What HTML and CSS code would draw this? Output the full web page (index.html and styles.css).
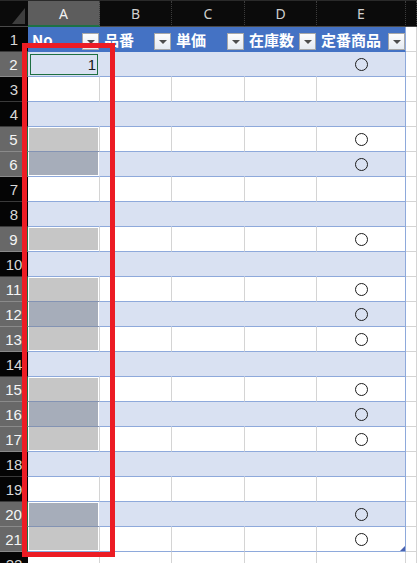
FILE: index.html
```html
<!DOCTYPE html>
<html lang="ja">
<head>
  <meta charset="UTF-8" />
  <meta name="viewport" content="width=device-width, initial-scale=1.0"/>
  <title>商品リスト</title>
  <link rel="stylesheet" href="styles.css">
</head>
<body>
  <div class="sheet">
    <div class="colhead">
      <div class="corner"></div>
      <div class="ch on">A</div>
      <div class="ch">B</div>
      <div class="ch">C</div>
      <div class="ch">D</div>
      <div class="ch">E</div>
      <div class="ch"></div>
    </div>

    <div class="row top">
      <div class="rh">1</div>
      <div class="c">No<span class="fb"></span></div>
      <div class="c">品番<span class="fb"></span></div>
      <div class="c">単価<span class="fb"></span></div>
      <div class="c">在庫数<span class="fb"></span></div>
      <div class="c e">定番商品<span class="fb"></span></div>
      <div class="c out"></div>
    </div>

    <div class="row even">
      <div class="rh on">2</div>
      <div class="c a active"><span class="num">1</span></div>
      <div class="c"></div><div class="c"></div><div class="c"></div>
      <div class="c e"><span class="mark"></span></div>
      <div class="c out"></div>
    </div>
    <div class="row">
      <div class="rh">3</div>
      <div class="c a"></div><div class="c"></div><div class="c"></div><div class="c"></div>
      <div class="c e"></div><div class="c out"></div>
    </div>
    <div class="row even">
      <div class="rh">4</div>
      <div class="c a"></div><div class="c"></div><div class="c"></div><div class="c"></div>
      <div class="c e"></div><div class="c out"></div>
    </div>
    <div class="row">
      <div class="rh on">5</div>
      <div class="c a sel first"></div><div class="c"></div><div class="c"></div><div class="c"></div>
      <div class="c e"><span class="mark"></span></div><div class="c out"></div>
    </div>
    <div class="row even">
      <div class="rh on">6</div>
      <div class="c a sel last"></div><div class="c"></div><div class="c"></div><div class="c"></div>
      <div class="c e"><span class="mark"></span></div><div class="c out"></div>
    </div>
    <div class="row">
      <div class="rh">7</div>
      <div class="c a"></div><div class="c"></div><div class="c"></div><div class="c"></div>
      <div class="c e"></div><div class="c out"></div>
    </div>
    <div class="row even">
      <div class="rh">8</div>
      <div class="c a"></div><div class="c"></div><div class="c"></div><div class="c"></div>
      <div class="c e"></div><div class="c out"></div>
    </div>
    <div class="row">
      <div class="rh on">9</div>
      <div class="c a sel first last"></div><div class="c"></div><div class="c"></div><div class="c"></div>
      <div class="c e"><span class="mark"></span></div><div class="c out"></div>
    </div>
    <div class="row even">
      <div class="rh">10</div>
      <div class="c a"></div><div class="c"></div><div class="c"></div><div class="c"></div>
      <div class="c e"></div><div class="c out"></div>
    </div>
    <div class="row">
      <div class="rh on">11</div>
      <div class="c a sel first"></div><div class="c"></div><div class="c"></div><div class="c"></div>
      <div class="c e"><span class="mark"></span></div><div class="c out"></div>
    </div>
    <div class="row even">
      <div class="rh on">12</div>
      <div class="c a sel"></div><div class="c"></div><div class="c"></div><div class="c"></div>
      <div class="c e"><span class="mark"></span></div><div class="c out"></div>
    </div>
    <div class="row">
      <div class="rh on">13</div>
      <div class="c a sel last"></div><div class="c"></div><div class="c"></div><div class="c"></div>
      <div class="c e"><span class="mark"></span></div><div class="c out"></div>
    </div>
    <div class="row even">
      <div class="rh">14</div>
      <div class="c a"></div><div class="c"></div><div class="c"></div><div class="c"></div>
      <div class="c e"></div><div class="c out"></div>
    </div>
    <div class="row">
      <div class="rh on">15</div>
      <div class="c a sel first"></div><div class="c"></div><div class="c"></div><div class="c"></div>
      <div class="c e"><span class="mark"></span></div><div class="c out"></div>
    </div>
    <div class="row even">
      <div class="rh on">16</div>
      <div class="c a sel"></div><div class="c"></div><div class="c"></div><div class="c"></div>
      <div class="c e"><span class="mark"></span></div><div class="c out"></div>
    </div>
    <div class="row">
      <div class="rh on">17</div>
      <div class="c a sel last"></div><div class="c"></div><div class="c"></div><div class="c"></div>
      <div class="c e"><span class="mark"></span></div><div class="c out"></div>
    </div>
    <div class="row even">
      <div class="rh">18</div>
      <div class="c a"></div><div class="c"></div><div class="c"></div><div class="c"></div>
      <div class="c e"></div><div class="c out"></div>
    </div>
    <div class="row">
      <div class="rh">19</div>
      <div class="c a"></div><div class="c"></div><div class="c"></div><div class="c"></div>
      <div class="c e"></div><div class="c out"></div>
    </div>
    <div class="row even">
      <div class="rh on">20</div>
      <div class="c a sel first"></div><div class="c"></div><div class="c"></div><div class="c"></div>
      <div class="c e"><span class="mark"></span></div><div class="c out"></div>
    </div>
    <div class="row">
      <div class="rh on">21</div>
      <div class="c a sel last"></div><div class="c"></div><div class="c"></div><div class="c"></div>
      <div class="c e"><span class="mark"></span><span class="grip"></span></div><div class="c out"></div>
    </div>
    <div class="row blank">
      <div class="rh">22</div>
      <div class="c"></div><div class="c"></div><div class="c"></div><div class="c"></div>
      <div class="c"></div><div class="c"></div>
    </div>

    <div class="frame"></div>
  </div>
</body>
</html>
```

FILE: styles.css
```css
html, body {
  margin: 0;
  height: 100%;
  overflow: hidden;
  background: #fff;
}

body {
  font-family: "Noto Sans CJK JP", "Noto Sans", sans-serif;
}

.sheet {
  position: relative;
  width: 417px;
}

/* column letters */
.colhead,
.row {
  display: grid;
  grid-template-columns: 28px 72px 72px 73px 72px 89px 1fr;
}

.colhead {
  height: 27px;
  background: #0b0b0b;
  border-top: 1px solid #2a2a2a;
  box-sizing: border-box;
}

.corner {
  position: relative;
  border-bottom: 1px solid #4a4a4a;
}

.corner::after {
  content: "";
  position: absolute;
  right: 3px;
  bottom: 2px;
  width: 13px;
  height: 16px;
  background: #3e3e3e;
  clip-path: polygon(100% 0, 100% 100%, 0 100%);
}

.ch {
  display: flex;
  align-items: center;
  justify-content: center;
  font-family: "Noto Sans", sans-serif;
  font-size: 14px;
  color: #cfcfcf;
  border-right: 1px dotted #3c3c3c;
  border-bottom: 1px solid #4a4a4a;
}

.ch.on {
  background: #5d5d5d;
  color: #f2f2f2;
  border-bottom: 2px solid #1e7145;
}

/* rows */
.row {
  height: 25px;
}

.rh {
  display: flex;
  align-items: center;
  justify-content: center;
  box-sizing: border-box;
  background: #050505;
  color: #d8d8d8;
  font-family: "Liberation Sans", sans-serif;
  font-size: 15px;
  border-bottom: 1px solid #3a3a3a;
}

.rh.on {
  background: #686868;
  color: #f5f5f5;
  border-bottom-color: #8a8a8a;
  border-right: 1px solid #1e7145;
}

.c {
  display: flex;
  align-items: center;
  box-sizing: border-box;
  background: #fff;
  border-right: 1px solid #d4d4d4;
  border-bottom: 1px solid #8ea9db;
}

.row.even .c {
  background: #d9e1f2;
  border-right-color: #d9e1f2;
}

.c.e,
.row.even .c.e {
  justify-content: center;
  position: relative;
  border-right-color: #8ea9db;
}

.c.out,
.row.even .c.out {
  background: #fff;
  border-right-color: #d4d4d4;
  border-bottom-color: #d4d4d4;
}

/* table header */
.row.top .c {
  background: #4472c4;
  border-right-color: #4472c4;
  border-bottom-color: #4472c4;
  padding-left: 4px;
  color: #fff;
  font-size: 15px;
  font-weight: bold;
  line-height: 1;
}

.row.top .c.e {
  justify-content: flex-start;
  border-right-color: #8ea9db;
}

.row.top .c.out {
  background: #fff;
  border-right-color: #d4d4d4;
  border-bottom-color: #d4d4d4;
}

.fb {
  position: relative;
  margin-left: auto;
  align-self: flex-end;
  margin-bottom: 1px;
  width: 17px;
  height: 17px;
  box-sizing: border-box;
  border: 1px solid #a8a8a8;
  background: linear-gradient(#fdfdfd, #e6ebf3);
}

.fb::after {
  content: "";
  position: absolute;
  left: 4px;
  top: 6px;
  border-left: 4px solid transparent;
  border-right: 4px solid transparent;
  border-top: 4px solid #4d4d4d;
}

/* selection in column A */
.c.sel {
  background: #c6c6c6;
  box-shadow: inset 1px 0 #fff, inset -1px 0 #fff;
  border-bottom-color: #8393b3;
}

.row.even .c.sel {
  background: #a6adba;
}

.c.sel.first {
  box-shadow: inset 1px 0 #fff, inset -1px 0 #fff, inset 0 1px #fff;
}

.c.sel.last {
  box-shadow: inset 1px 0 #fff, inset -1px 0 #fff, inset 0 -1px #fff;
  border-bottom-color: #8ea9db;
}

.c.sel.first.last {
  box-shadow: inset 0 0 0 1px #fff;
}

.c.active {
  justify-content: flex-end;
  outline: 1px solid #1e6f42;
  outline-offset: -3px;
}

.num {
  padding-right: 3px;
  font-family: "Liberation Sans", sans-serif;
  font-size: 15px;
  color: #1a1a1a;
}

.mark {
  width: 13px;
  height: 13px;
  box-sizing: border-box;
  border: 1px solid #1c1c1c;
  border-radius: 50%;
}

.grip {
  position: absolute;
  right: 0;
  bottom: 0;
  width: 5px;
  height: 5px;
  background: #4a62b0;
  clip-path: polygon(100% 0, 100% 100%, 0 100%);
}

.row.blank .c {
  background: #fff;
  border-right-color: #d4d4d4;
  border-bottom-color: #d4d4d4;
}

/* highlight box drawn over the sheet */
.frame {
  position: absolute;
  left: 22px;
  top: 43px;
  width: 93px;
  height: 514px;
  box-sizing: border-box;
  border: 5px solid #ec1c24;
  pointer-events: none;
}
```
